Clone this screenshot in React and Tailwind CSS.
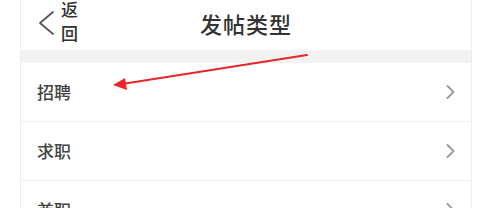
const rows = ['招聘', '求职', '兼职']

function Arrow() {
  return (
    <svg width="11" height="16" viewBox="0 0 11 16" fill="none" stroke="#9a9a9a" strokeWidth="1.8" strokeLinecap="round" strokeLinejoin="round">
      <path d="M2.5 2 L8.5 8 L2.5 14" />
    </svg>
  )
}

export default function App() {
  return (
    <div className="relative w-[480px] h-[208px] overflow-hidden bg-white" style={{ fontFamily: '"Noto Sans CJK SC", "Noto Sans", sans-serif' }}>
      <div className="ml-[20px] w-[452px] h-full border-l border-r border-[#ededed]">
        {/* header */}
        <div className="relative h-[50px] flex items-center justify-center">
          <div className="absolute left-[16px] top-0 flex items-start">
            <svg width="19" height="26" viewBox="0 0 19 26" className="mt-[10px]" fill="none" stroke="#555" strokeWidth="1.8" strokeLinecap="round" strokeLinejoin="round">
              <path d="M16 2 L3 13 L16 24" />
            </svg>
            <div className="ml-[5px] flex flex-col text-[17px] leading-[24px] text-[#333] font-medium -mt-[3px]">
              <span>返</span>
              <span>回</span>
            </div>
          </div>
          <span className="text-[22px] text-[#333] font-medium tracking-[1px] -mt-[4px]">发帖类型</span>
        </div>
        <div className="h-[13px] bg-[#f2f2f2]" />
        {rows.map((r) => (
          <div key={r} className="h-[59px] flex items-center justify-between pl-[16px] pr-[15px] border-b border-[#f0f0f0]">
            <span className="text-[17px] text-[#444] font-medium">{r}</span>
            <Arrow />
          </div>
        ))}
      </div>
      {/* red annotation arrow */}
      <svg className="absolute left-0 top-0 pointer-events-none" width="480" height="208" viewBox="0 0 480 208">
        <line x1="307" y1="55" x2="122" y2="84" stroke="#e8262a" strokeWidth="2" strokeLinecap="round" />
        <polygon points="113,85 125,78 127,90" fill="#e8262a" />
      </svg>
    </div>
  )
}
